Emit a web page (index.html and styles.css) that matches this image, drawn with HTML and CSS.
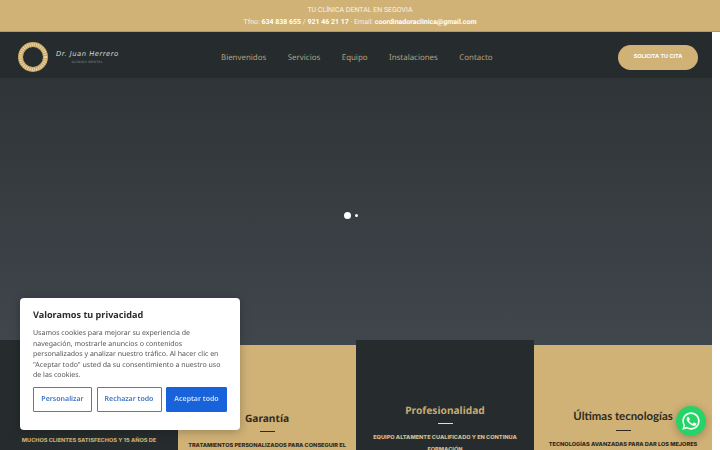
FILE: index.html
```html
<!DOCTYPE html>
<html lang="es">
<head>
  <meta charset="UTF-8" />
  <meta name="viewport" content="width=device-width, initial-scale=1.0"/>
  <title>Dr. Juan Herrero - Clínica Dental</title>
  <link rel="stylesheet" href="styles.css">
</head>
<body>
<!-- TOP BAR -->
<div class="topbar">
  <p>TU CLÍNICA DENTAL EN SEGOVIA</p>
  <p>Tfno: <b>634 838 655</b> / <b>921 46 21 17</b> · Email: <b>coordinadoraclinica@gmail.com</b></p>
</div>

<div class="page">
  <!-- HEADER -->
  <header class="header">
    <a class="logo" href="#">
      <svg class="logo-ring" width="32" height="32" viewBox="0 0 32 32">
        <circle cx="16" cy="16" r="12.5" fill="none" stroke="#c9a96a" stroke-width="5"/>
        <circle cx="16" cy="16" r="12.5" fill="none" stroke="#ecd9ae" stroke-width="3" stroke-dasharray="1 1.2"/>
      </svg>
      <span class="logo-text">
        <span class="logo-name">Dr. Juan Herrero</span>
        <span class="logo-sub">CLÍNICA DENTAL</span>
      </span>
    </a>
    <nav class="nav">
      <a href="#">Bienvenidos</a>
      <a href="#">Servicios</a>
      <a href="#">Equipo</a>
      <a href="#">Instalaciones</a>
      <a href="#">Contacto</a>
    </nav>
    <a class="cta" href="#">SOLICITA TU CITA</a>
  </header>

  <!-- HERO SLIDER -->
  <section class="hero">
    <div class="dots">
      <span class="dot dot-active"></span>
      <span class="dot"></span>
    </div>
  </section>

  <!-- CARDS -->
  <section class="cards">
    <div class="card card-dark card-first">
      <h3>Experiencia</h3>
      <div class="rule"></div>
      <p>MUCHOS CLIENTES SATISFECHOS Y 15 AÑOS DE</p>
    </div>
    <div class="card card-gold card-second">
      <h3>Garantía</h3>
      <div class="rule"></div>
      <p>TRATAMIENTOS PERSONALIZADOS PARA CONSEGUIR EL</p>
    </div>
    <div class="card card-dark card-third">
      <h3>Profesionalidad</h3>
      <div class="rule"></div>
      <p>EQUIPO ALTAMENTE CUALIFICADO Y EN CONTINUA FORMACIÓN</p>
    </div>
    <div class="card card-gold card-fourth">
      <h3 class="lato">Últimas tecnologías</h3>
      <div class="rule"></div>
      <p>TECNOLOGÍAS AVANZADAS PARA DAR LOS MEJORES</p>
    </div>
  </section>
</div>

<!-- COOKIE NOTICE -->
<div class="cookie">
  <h4>Valoramos tu privacidad</h4>
  <p>Usamos cookies para mejorar su experiencia de navegación, mostrarle anuncios o contenidos personalizados y analizar nuestro tráfico. Al hacer clic en "Aceptar todo" usted da su consentimiento a nuestro uso de las cookies.</p>
  <div class="cookie-btns">
    <button class="btn-outline btn-custom">Personalizar</button>
    <button class="btn-outline btn-reject">Rechazar todo</button>
    <button class="btn-fill">Aceptar todo</button>
  </div>
</div>

<!-- WHATSAPP -->
<a class="whatsapp" href="#">
  <svg width="20" height="20" viewBox="0 0 24 24">
    <path fill="#fff" d="M12 1.6C6.2 1.6 1.6 6.2 1.6 12c0 1.9.5 3.7 1.4 5.2L1.5 22.5l5.400-1.400c1.500.8 3.300 1.300 5.100 1.300 5.800 0 10.400-4.600 10.400-10.400S17.800 1.600 12 1.600zm0 2c4.700 0 8.400 3.700 8.400 8.400s-3.700 8.400-8.400 8.400c-1.700 0-3.200-.5-4.600-1.300l-.4-.2-3 .8.8-2.900-.3-.4C3.700 15.100 3.600 13.600 3.600 12c0-4.700 3.700-8.400 8.400-8.400z"/>
    <path fill="#fff" d="M8.600 6.900c-.2 0-.5.1-.8.4-.3.3-1 1-1 2.400s1 2.800 1.200 3c.1.2 2 3.100 4.900 4.300 2.400 1 2.900.8 3.400.7.5 0 1.700-.7 1.900-1.300.2-.7.2-1.200.2-1.300-.1-.1-.3-.2-.6-.4l-2-.9c-.3-.1-.5-.2-.7.100l-.9 1.200c-.2.200-.3.200-.6.100-.3-.2-1.200-.5-2.300-1.400-.9-.8-1.400-1.700-1.600-2-.2-.3 0-.5.100-.6l.4-.5c.2-.2.200-.3.300-.5.1-.2.100-.4 0-.5l-.9-2.100c-.2-.5-.5-.5-.7-.5z"/>
  </svg>
</a>
</body>
</html>
```

FILE: styles.css
```css
body {
  margin: 0;
  height: 450px;
  overflow: hidden;
  background: #fff;
  font-family: "Noto Sans", sans-serif;
  text-rendering: geometricPrecision;
}
p, h3, h4 { margin: 0; }
a { text-decoration: none; }

.topbar {
  height: 32px;
  padding-top: 4px;
  box-sizing: border-box;
  background: #d0b176;
  border-bottom: 1px solid #b89a60;
  text-align: center;
  color: #fbf3e2;
  font-family: Roboto, sans-serif;
  font-size: 7px;
  line-height: 12px;
}
.topbar b { color: #fff; }

.page { width: 712px; }

.header {
  height: 46px;
  background: #262c2d;
  display: flex;
  align-items: center;
  padding: 4px 14px 0 17px;
  box-sizing: border-box;
}
.logo {
  display: flex;
  align-items: center;
  gap: 7px;
  width: 204px;
}
.logo-text {
  display: flex;
  flex-direction: column;
  align-items: center;
  margin-top: 1px;
}
.logo-name {
  color: #d4d6d4;
  font-family: "DejaVu Sans", sans-serif;
  font-size: 6.8px;
  font-style: italic;
  font-weight: 300;
  letter-spacing: .5px;
  line-height: 9px;
}
.logo-sub {
  color: #8f9390;
  font-family: "Liberation Sans", sans-serif;
  font-size: 3.2px;
  letter-spacing: .4px;
  line-height: 6px;
}
.nav {
  display: flex;
  gap: 21.5px;
  flex: 1;
  padding-top: 1px;
}
.nav a {
  color: #b5a27c;
  font-size: 7.9px;
  line-height: 14px;
}
.cta {
  width: 80px;
  height: 25px;
  line-height: 25px;
  text-align: center;
  border-radius: 13px;
  background: #d0b176;
  color: #fff;
  font-family: Inter, sans-serif;
  font-size: 5.5px;
  font-weight: 700;
}

.hero {
  height: 267px;
  background: linear-gradient(#2f3437, #40474c);
  display: flex;
  justify-content: center;
  padding-top: 134px;
  box-sizing: border-box;
}
.dots {
  display: flex;
  align-items: center;
  gap: 4px;
  height: 7px;
  margin-right: 11px;
}
.dot {
  width: 3px;
  height: 3px;
  border-radius: 50%;
  background: #fff;
}
.dot-active {
  width: 7px;
  height: 7px;
}

.cards {
  display: grid;
  grid-template-columns: repeat(4, 178px);
  height: 105px;
}
.card {
  text-align: center;
  overflow: hidden;
  box-sizing: border-box;
}
.card h3 {
  font-size: 10.2px;
  line-height: 16px;
  font-weight: 700;
  margin-bottom: 1px;
}
.card h3.lato {
  font-family: Lato, sans-serif;
  font-size: 11.4px;
  margin-bottom: 0;
}
.card p {
  font-family: Inter, sans-serif;
  font-size: 5.6px;
  font-weight: 800;
  line-height: 12px;
}
.rule {
  width: 15px;
  height: 1px;
  margin: 5px auto 8px;
  background: currentColor;
}
.card-dark {
  margin-top: -5px;
  background: #262c2d;
  color: #c8ab72;
}
.card-gold {
  background: #d0b176;
  color: #2f2a1e;
}
.card-first { padding: 65px 8px 0 8px; }
.card-second { padding: 65px 6px 0 6px; }
.card-third { padding: 62px 10px 0 10px; }
.card-third p { color: #d6bd8c; }
.card-third .rule { background: #e8dcc2; }
.card-fourth { padding: 64px 8px 0 8px; }

.cookie {
  position: fixed;
  left: 20px;
  top: 298px;
  width: 220px;
  height: 132px;
  box-sizing: border-box;
  padding: 10px 13px 0 13px;
  background: #fff;
  border-radius: 4px;
  box-shadow: 0 2px 10px rgba(0, 0, 0, .25);
  color: #555;
}
.cookie h4 {
  color: #2d2d2d;
  font-size: 9.1px;
  font-weight: 700;
  line-height: 14px;
  margin-bottom: 7px;
}
.cookie p {
  font-size: 7px;
  line-height: 10.5px;
  margin-bottom: 5px;
}
.cookie-btns {
  display: flex;
  justify-content: space-between;
}
.cookie button {
  height: 25px;
  padding: 0;
  border-radius: 1px;
  font-family: "Noto Sans", sans-serif;
  font-size: 7px;
  font-weight: 600;
  text-rendering: geometricPrecision;
}
.btn-outline {
  background: #fff;
  border: 1.5px solid #4a7cc4;
  color: #3f74c4;
}
.btn-custom { width: 59px; }
.btn-reject { width: 65px; }
.btn-fill {
  width: 61px;
  background: #1863dc;
  border: 1px solid #1863dc;
  color: #cfe0fa;
}

.whatsapp {
  position: fixed;
  left: 676px;
  top: 406px;
  width: 30px;
  height: 30px;
  border-radius: 50%;
  background: #25d366;
  box-shadow: 0 2px 8px rgba(0, 0, 0, .25);
  display: flex;
  align-items: center;
  justify-content: center;
}
```
